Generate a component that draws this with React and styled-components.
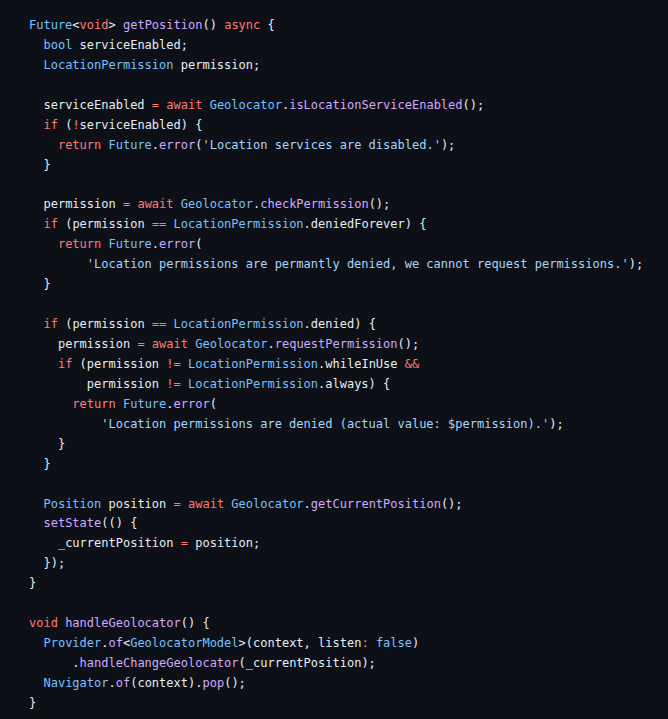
import React from "react";
import styled, { createGlobalStyle } from "styled-components";

const GlobalStyle = createGlobalStyle`
  html, body {
    margin: 0;
    padding: 0;
    background: #0d1117;
  }
`;

const Page = styled.div`
  min-height: 719px;
  background: #0d1117;
  padding: 16px 0 0 29px;
  box-sizing: border-box;
`;

const CodeBlock = styled.pre`
  margin: 0;
  font-family: "DejaVu Sans Mono", "Liberation Mono", monospace;
  font-size: 12px;
  line-height: 19.95px;
  color: #e6edf3;
  white-space: pre;
  tab-size: 2;
`;

const Line = styled.div`
  height: 19.95px;
`;

const colors = {
  plain: "#e6edf3",
  kw: "#ff7b72",
  op: "#ff7b72",
  type: "#79c0ff",
  fn: "#d2a8ff",
  str: "#a5d6ff",
};

const Token = styled.span`
  color: ${(p) => colors[p.$kind] || colors.plain};
`;

const CODE = `Future<void> getPosition() async {
  bool serviceEnabled;
  LocationPermission permission;

  serviceEnabled = await Geolocator.isLocationServiceEnabled();
  if (!serviceEnabled) {
    return Future.error('Location services are disabled.');
  }

  permission = await Geolocator.checkPermission();
  if (permission == LocationPermission.deniedForever) {
    return Future.error(
        'Location permissions are permantly denied, we cannot request permissions.');
  }

  if (permission == LocationPermission.denied) {
    permission = await Geolocator.requestPermission();
    if (permission != LocationPermission.whileInUse &&
        permission != LocationPermission.always) {
      return Future.error(
          'Location permissions are denied (actual value: $permission).');
    }
  }

  Position position = await Geolocator.getCurrentPosition();
  setState(() {
    _currentPosition = position;
  });
}

void handleGeolocator() {
  Provider.of<GeolocatorModel>(context, listen: false)
      .handleChangeGeolocator(_currentPosition);
  Navigator.of(context).pop();
}`;

const KEYWORDS = new Set(["async", "await", "if", "return", "void"]);
const TYPES = new Set([
  "Future",
  "bool",
  "LocationPermission",
  "Geolocator",
  "Position",
  "Provider",
  "GeolocatorModel",
  "Navigator",
  "false",
]);

function tokenize(line) {
  const re = /('[^']*')|([A-Za-z_$][\w$]*)|(==|!=|&&|=|!|:)|(\s+)|(.)/g;
  const out = [];
  let m;
  while ((m = re.exec(line))) {
    if (m[1]) out.push(["str", m[1]]);
    else if (m[2]) {
      const w = m[2];
      const rest = line.slice(re.lastIndex);
      let kind = "plain";
      if (KEYWORDS.has(w)) kind = "kw";
      else if (TYPES.has(w)) kind = "type";
      else if (/^[(<]/.test(rest)) kind = "fn";
      out.push([kind, w]);
    } else if (m[3]) out.push(["op", m[3]]);
    else out.push(["plain", m[0]]);
  }
  return out;
}

export default function App() {
  const lines = CODE.split("\n");
  return (
    <>
      <GlobalStyle />
      <Page>
        <CodeBlock>
          {lines.map((ln, i) => (
            <Line key={i}>
              {ln.length === 0
                ? " "
                : tokenize(ln).map(([k, t], j) => (
                    <Token key={j} $kind={k}>
                      {t}
                    </Token>
                  ))}
            </Line>
          ))}
        </CodeBlock>
      </Page>
    </>
  );
}
